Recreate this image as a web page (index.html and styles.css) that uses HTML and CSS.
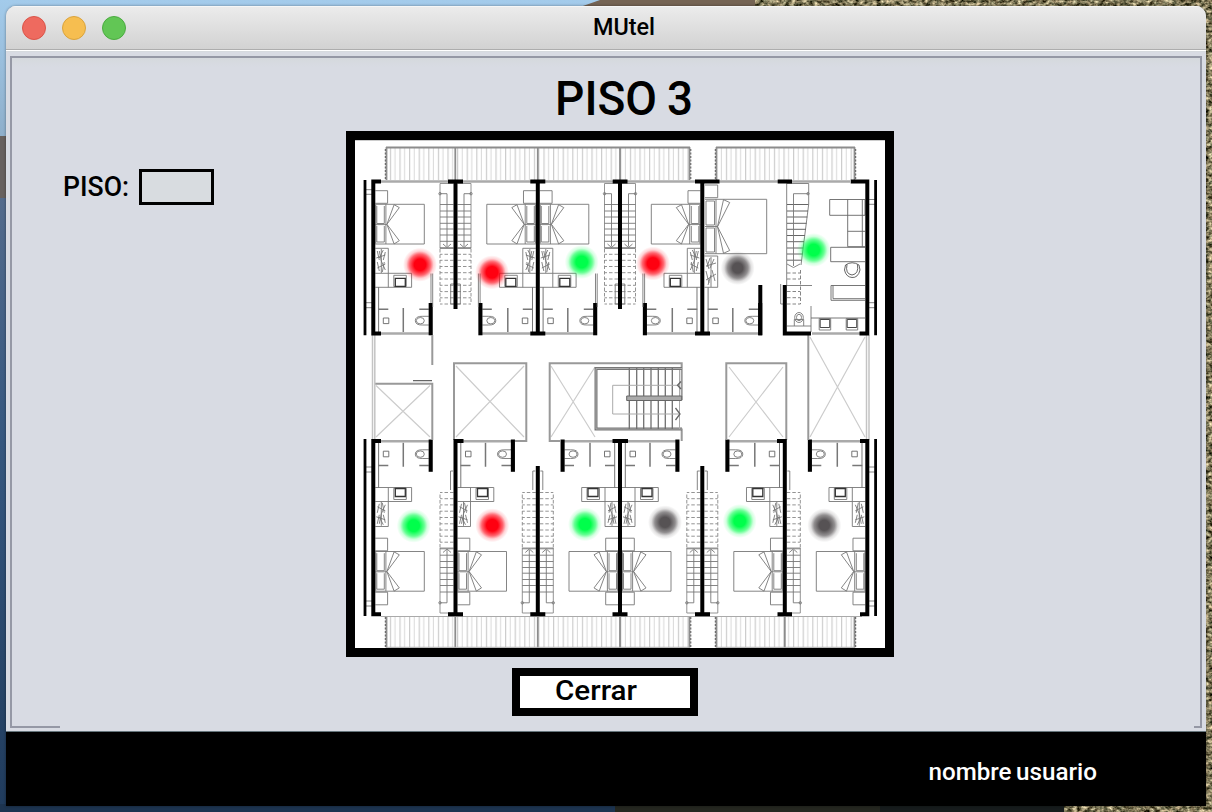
FILE: index.html
```html
<!DOCTYPE html>
<html lang="es">
<head>
<meta charset="utf-8">
<title>MUtel</title>
<link rel="stylesheet" href="styles.css">
</head>
<body>
<div class="desktop">
<svg class="wallpaper" width="1212" height="812" aria-hidden="true">
  <defs>
    <linearGradient id="sky" x2="0" y2="1"><stop offset="0" stop-color="#a3cbeb"/><stop offset="1" stop-color="#8eafcb"/></linearGradient>
    <linearGradient id="sea" x2="0" y2="1"><stop offset="0" stop-color="#536b8c"/><stop offset=".4" stop-color="#35577f"/><stop offset="1" stop-color="#203b5c"/></linearGradient>
    <filter id="rock" x="0" y="0" width="100%" height="100%" color-interpolation-filters="sRGB">
      <feTurbulence type="fractalNoise" baseFrequency=".22 .3" numOctaves="3" seed="8"/>
      <feColorMatrix values="1.4 0 0 0 -.19  1.3 .1 0 0 -.22  1.15 .1 0 0 -.27  0 0 0 0 1"/>
      <feComposite in2="SourceGraphic" operator="in"/>
    </filter>
  </defs>
  <rect width="1212" height="136" fill="url(#sky)"/>
  <rect y="136" width="8" height="64" fill="#67615f"/>
  <rect y="198" width="8" height="614" fill="url(#sea)"/>
  <rect y="804" width="620" height="8" fill="#1d3450"/>
  <path d="M580 7L600 0H780L760 7z" fill="#756454"/>
  <path d="M755 0H1212V812H1064V804H1200V10H755z" filter="url(#rock)"/>
  <path d="M615 804H880V812H615z" fill="#252720"/><path d="M880 804H1064V812H880z" fill="#171c1d"/>
</svg>
<div class="window">
  <header class="titlebar">
    <span class="light red"></span><span class="light amber"></span><span class="light green"></span>
    <svg class="app-name" width="70" height="30"><text x="1" y="24" font-size="24" textLength="62" lengthAdjust="spacingAndGlyphs">MUtel</text></svg>
  </header>
  <main class="pane">
    <svg class="heading" width="150" height="59"><text y="43" font-size="49"><tspan x="5" textLength="102" lengthAdjust="spacingAndGlyphs">PISO</tspan><tspan x="117" textLength="26" lengthAdjust="spacingAndGlyphs">3</tspan></text></svg>
    <div class="row">
      <div class="form">
        <svg width="76" height="36"><text x="0" y="26.500" font-size="27.5" textLength="66" lengthAdjust="spacingAndGlyphs">PISO:</text></svg>
        <span class="field"></span>
      </div>
      <div class="frame">
<svg class="plan" width="530" height="508" viewBox="355 140 530 508">
  <defs>
    <radialGradient id="r"><stop offset=".34" stop-color="#ff0010"/><stop offset=".62" stop-color="#ff0010" stop-opacity=".6"/><stop offset=".8" stop-color="#ff0010" stop-opacity=".18"/><stop offset="1" stop-color="#ff0010" stop-opacity="0"/></radialGradient>
    <radialGradient id="g"><stop offset=".34" stop-color="#00ff4b"/><stop offset=".62" stop-color="#00ff4b" stop-opacity=".6"/><stop offset=".8" stop-color="#00ff4b" stop-opacity=".18"/><stop offset="1" stop-color="#00ff4b" stop-opacity="0"/></radialGradient>
    <radialGradient id="k"><stop offset=".3" stop-color="#565254"/><stop offset=".6" stop-color="#565254" stop-opacity=".65"/><stop offset=".8" stop-color="#565254" stop-opacity=".18"/><stop offset="1" stop-color="#565254" stop-opacity="0"/></radialGradient>
    <pattern id="slats" x="386" width="9.6" height="40" patternUnits="userSpaceOnUse"><path d="M4.500 0V40" stroke="#c2c2c2"/><path d="M9 0V40" stroke="#d8d8d8"/></pattern>
    <g id="bed">
      <path d="M2 204.3H51V244H2M2.5 205V243.500M12.600 204.3V244M11 206V223.500H3.500V206M11 226V242H3.500V226M2 224.6H13.600"/>
      <path d="M13.600 224.3L20.800 204.700L26 207.600zM13.600 224.3L20.800 243.900L26 240.700z"/>
    </g>
    <path id="stand" d="M2 190.7H14.300V203.300H2"/>
    <g id="closet">
      <path d="M2 248.300H15V273.300M8 249V273"/>
      <path d="M4 251L6 260M6 251L8 261M10 250L6 258M12 252L10 260M4 262L6 271M8 261L12 270M11 262L9 272M3 258L12 255M4 268L12 264" stroke-width=".9"/>
    </g>
    <g id="desk"><path d="M2 273.300H38.300V287.300H2M15 273.300V287.300M20.500 286.600V275.300H33V286.600z"/><path d="M22 278.300H32V286.300H22z" stroke="#333" stroke-width="1.300"/></g>
    <g id="bath">
      <path d="M5.300 287.300V332M10 318H15.500V323.600H10z" stroke="#666"/>
      <path d="M5 309.300H15M46 309.300H55.500M30 308V332" stroke="#777" stroke-width="1.500"/>
      <path d="M55.500 316.300H49.500Q42 316 42 320.700Q42 325.300 49.500 325H55.500"/><ellipse cx="47" cy="320.700" rx="4" ry="3.200"/>
      <path d="M7 333.500H56" stroke="#aaa" stroke-width="2.500"/>
      <path d="M57.400 303V335.300" stroke="#000" stroke-width="4.100"/>
    </g>
    <path id="door" d="M57.700 273.500V303M59.400 273.500V307" stroke="#777"/>
    <g id="wet"><use href="#closet"/><use href="#desk"/><use href="#bath"/></g>
    <g id="suite"><use href="#stand"/><use href="#bed"/><use href="#wet"/><use href="#door"/></g>
    <g id="lower"><use href="#wet" transform="matrix(1 0 0 -1 0 774.800)"/><use href="#bed" y="347.200"/><use href="#stand" y="347.500"/><use href="#stand" y="401.500"/></g>
    <g id="steps">
      <path d="M2 183.500H15.500V248.500H2" stroke="#888"/>
      <path d="M2 204.500H15.500M2 211H15.500M2 217H15.500M2 223.300H15.500M2 229H15.500M2 235H15.500M2 241.300H15.500M2 247.700H15.500"/>
      <path d="M15.500 193.700H8.500V246.500M4.500 244L8.500 247.500L12.500 244" stroke="#777"/><circle cx="15.500" cy="193.700" r="1.200"/>
      <path d="M15.500 249V304M2 254.300H15.500M2 260.300H15.500M2 266.500H15.500M2 272.700H15.500M2 279H15.500M2 285.300H15.500M2 291.600H15.500M2 297.800H15.500M2 304H15.500" stroke-dasharray="3.500 2" stroke="#888"/>
    </g>
    <g id="steps2"><use href="#steps"/><use href="#steps" transform="scale(-1 1)"/></g>
    <path id="jamb" d="M2.500 471H5V490" stroke="#777"/>
    <g id="sink"><path d="M0 0H11.500V11.500H0z"/><path d="M1 1H10.500V9H1z" stroke="#333"/></g>
  </defs>
  <rect x="355" y="140" width="530" height="508" fill="#fff"/>
  <path d="M355 140.500H885" stroke="#ccc"/>

  <!-- balconies -->
  <g fill="url(#slats)" stroke="none"><rect x="388" y="148" width="301" height="32"/><rect x="718" y="148" width="136" height="32"/><rect x="388" y="617" width="301" height="30"/><rect x="718" y="617" width="136" height="30"/></g>
  <g fill="none" stroke="#8c8c8c" stroke-width="1.800">
    <path d="M386 147.500H690M716 147.500H855M386.500 147V180M455.300 147V180M537.800 147V180M620 147V180M689.500 147V180M716.500 147V180M854.500 147V180M386.500 616V647.500M455.300 616V647.500M537.800 616V647.500M620 616V647.500M689.500 616V647.500M716.500 616V647.500M784.800 616V647.500M854.500 616V647.500"/>
    <path d="M385.300 149V180M690.800 149V180M715.300 149V180M855.700 149V180M385.300 617V647M690.800 617V647M715.300 617V647M855.700 617V647" stroke="#555" stroke-width="1" stroke-dasharray="2 1.500"/>
    <path d="M381 181.500H850" stroke="#aaa" stroke-width="2.500"/>
    <path d="M381 616.500H862M386 647.300H690M716 647.300H855" stroke="#aaa" stroke-width="1"/>
  </g>

  <g class="thin">
    <!-- upper suites -->
    <use href="#suite" x="373.300"/>
    <use href="#suite" transform="matrix(-1 0 0 1 537.800 0)"/>
    <use href="#suite" x="537.800"/>
    <use href="#suite" transform="matrix(-1 0 0 1 702.300 0)"/>
    <use href="#bath" x="702.800"/>
    <path d="M705 185H717.700V197.700H705M705 199.300H766.700V253.700H705M716 199.300V253.700M706 201H714.500V225H706zM706 228H714.500V252H706zM705 226.500H717.500"/>
    <path d="M717.500 226.700L723.500 199.700L729.700 202.500zM717.500 226.700L723.500 253.300L729.700 250.500z"/>
    <path d="M704.500 256H717.700V287.300H704.500M711 257V287M706 259L709 269M710 258L707 267M714 259L710 268M706 271L709 283M712 270L715 281M711 275L708 285M706 266L716 263M706 280L716 274"/>
    <use href="#steps2" x="455.500"/><use href="#steps2" x="620"/>
    <path d="M450.700 284H460.300V304H450.700zM615.200 284H624.800V304H615.200z"/>

    <!-- lounge -->
    <path d="M786.700 183.300V285M786.700 183.500H808.700V204.300L801 265"/>
    <path d="M787 204.500H808.500M787 211H808M787 217H807.300M787 223.300H806.500M787 229.300H805.700M787 235.500H804.800M787 241.700H804M787 248H803.200M787 254H802.500M787 260.200H801.500" stroke="#555"/>
    <path d="M808 193.700H793.500V266M787 264L793.500 267.500L800 264"/><circle cx="808" cy="193.700" r="1.200"/>
    <path d="M787 273H800.500M787 279H800.500M787 291.500H800.500M787 297.700H800.500M787 304H800.500V268" stroke-dasharray="3.500 2"/>
    <path d="M787 285.500H812M811 306V332M787 326H811M780.700 284V304H783M794.300 326V319.500H803.700V326"/><ellipse cx="799" cy="317.500" rx="4.300" ry="5"/><ellipse cx="799" cy="317.500" rx="2.500" ry="3.200"/>
    <path d="M811 318H865M829.700 199.500H865V215.300H829.700zM847.700 199.500V246.700H865M862.300 199.500V246.700M847.700 231.300H865M865 247.300H830.700V261.700H865M865 285.500H831V300.300H865M833 285.500V298.700H865" stroke="#666"/>
    <path d="M812 333.500H860" stroke="#aaa" stroke-width="2.500"/>
    <use href="#sink" x="819.200" y="318.500"/><use href="#sink" x="846.200" y="318.500"/>
    <path d="M845.500 265Q852 260.500 859 265L860 270Q858 278 852 277.500Q846 277 844.500 270zM847 264.500Q845 274 852 275Q859 274 857.500 264.500" stroke="#555"/>

    <!-- lower suites -->
    <use href="#lower" x="373.300"/><use href="#lower" x="455.500"/>
    <use href="#lower" transform="matrix(-1 0 0 1 620 0)"/>
    <use href="#lower" x="620"/>
    <use href="#lower" transform="matrix(-1 0 0 1 784.800 0)"/><use href="#lower" transform="matrix(-1 0 0 1 867.300 0)"/>
    <use href="#steps" transform="matrix(-1 0 0 -1 455.500 796.500)"/>
    <use href="#steps2" transform="matrix(1 0 0 -1 537.800 796.500)"/>
    <use href="#steps2" transform="matrix(1 0 0 -1 702.300 796.500)"/>
    <use href="#steps" transform="matrix(1 0 0 -1 784.800 796.500)"/>
    <use href="#jamb" transform="matrix(-1 0 0 1 455.500 0)"/><use href="#jamb" transform="matrix(-1 0 0 1 537.800 0)"/><use href="#jamb" x="537.800"/><use href="#jamb" transform="matrix(-1 0 0 1 702.300 0)"/><use href="#jamb" x="702.300"/><use href="#jamb" x="784.800"/>

    <!-- facade ties -->
    <path d="M366 189.700H372M366 194.300H372M366 302.700H372M366 307.700H372M869 199.500H875M869 204.300H875M869 302.700H875M869 307.700H875M366 467H372M366 472H372M366 601H372M366 606H372M869 467H875M869 472H875M869 601H875M869 606H875"/>
  </g>

  <!-- courtyards and stair core -->
  <g fill="none" stroke="#ccc" stroke-width="1.200">
    <path d="M376 385.500L430 437M430 385.500L376 437M456 366L524 437M524 366L456 437M551 366L595 437M595 367L551 437M729 367L783 437M783 367L729 437M810 337L865 437M865 337L810 437"/>
  </g>
  <g fill="none" stroke="#999" stroke-width="2">
    <path d="M432.300 335V365M375 383.700H432.300V440M454 440V363.300H526.300V441H515M560 441H549.700V363.300H681.700V400M681.700 441V428.500M726.300 440V363.300H786.300V440M808.300 335V440"/>
    <path d="M372.500 335V440M374.800 335V440M866.500 335V440M869 335V440" stroke="#c4c4c4" stroke-width="1.500"/>
    <path d="M682 368.500H596V429H682" stroke="#777" stroke-width="3"/>
    <path d="M682 368.500H596V429H682" stroke="#aaa" stroke-width="1"/>
    <path d="M629.300 368V429M636.700 368V429M643.700 368V429M651 368V429M658.300 368V429M665.300 368V429M672.300 368V429" stroke="#707070" stroke-width="1.300"/>
    <path d="M679.500 370V429M680 385.300H612.700V414H679" stroke="#aaa" stroke-width="1"/>
    <path d="M626.700 396H681.700V400.500H626.700z" fill="#aaa" stroke="#666" stroke-width="1"/>
    <path d="M681 381.500L677.500 385.300L681 389M675.500 408L680 414L675.500 420M413 380.700H432" stroke="#666" stroke-width="1.300"/>
  </g>

  <!-- structural walls -->
  <g fill="none" stroke="#000" stroke-width="4">
    <path d="M381 181.600H373.300V333.500H381M448 181.600H463M455.500 181V309M530.300 181.600H545.300M537.800 181V334M530.300 333.500H545.300M612.700 181.600H627.500M620 181V309M695 181.600H719.500M702.300 181V334M695 333.500H710M777.700 181.600H792M760.300 285V335.300M811 333.500H784.800V285M850.700 181.600H867.300V333.500H859.500"/>
    <path d="M381 441H373.300V614.200H381M463.500 441H455.500V614.200M448 614.200H463M537.800 466V614.200M530.300 614.200H545.300M612.500 441H628M620 441V614.200M612.500 614.200H627.500M702.300 466V614.200M695 614.200H710M777 441H784.800V614.200M777.500 614.200H792M860 441H867.300V614.200H860"/>
    <path d="M365 180V335.300M875.600 180V335.300M365 439V616M875.600 439V616" stroke-width="2.800"/>
  </g>

  <!-- room status -->
  <g fill="url(#r)"><circle cx="420" cy="264.700" r="17"/><circle cx="492" cy="272.300" r="17"/><circle cx="653" cy="263.500" r="17"/><circle cx="492.300" cy="525.300" r="17"/></g>
  <g fill="url(#g)"><circle cx="581.700" cy="262" r="17"/><circle cx="813.700" cy="250" r="17"/><circle cx="413.700" cy="525.700" r="17"/><circle cx="585" cy="524.300" r="17"/><circle cx="739.700" cy="521" r="17"/></g>
  <g fill="url(#k)"><circle cx="737.700" cy="268" r="17"/><circle cx="665" cy="522.300" r="17"/><circle cx="824.300" cy="525.300" r="17"/></g>
</svg>
      </div>
    </div>
    <button class="close" type="button"><svg width="90" height="32"><text x="1" y="24" font-size="28" textLength="82" lengthAdjust="spacingAndGlyphs">Cerrar</text></svg></button>
  </main>
  <footer class="status"><svg width="172" height="34"><text y="24" font-size="23.500"><tspan x="1.500" textLength="83" lengthAdjust="spacingAndGlyphs">nombre</tspan><tspan x="89" textLength="81" lengthAdjust="spacingAndGlyphs">usuario</tspan></text></svg></footer>
</div>
</div>
</body>
</html>
```
FILE: styles.css
```css
* { box-sizing: border-box; }
body { margin: 0; overflow: hidden; font-family: Roboto, "Liberation Sans", sans-serif; font-weight: 500; }
svg { display: block; flex: none; }
.desktop { width: 1212px; height: 812px; padding: 6px; display: grid; overflow: hidden; }
.wallpaper { grid-area: 1 / 1; margin: -6px; }
.window {
  grid-area: 1 / 1; z-index: 1; width: 1200px; height: 800px;
  display: flex; flex-direction: column; overflow: hidden;
  border-radius: 10px 10px 0 0; background: #d8dbe3;
  box-shadow: 0 0 3px rgba(0, 0, 0, .4);
}
.titlebar {
  height: 46px; flex: none; display: flex; align-items: flex-start; gap: 16px; padding: 10px 16px 0;
  background: linear-gradient(#ececec, #d2d2d2 43px, #adadad 43px, #adadad 44px, #fff 44px, #fff 45px, #d6dade 45px);
  box-shadow: inset 0 1px #f6f6f6;
}
.light { width: 24px; height: 24px; border-radius: 50%; border: 1px solid; }
.red { background: #ee6a5f; border-color: #d95549; }
.amber { background: #f6be50; border-color: #d9a33d; }
.green { background: #62c655; border-color: #4bab40; }
.app-name { margin: -5px 0 0 450px; }
.pane {
  margin: 4px 4px 3px; height: 672px; flex: none;
  display: flex; flex-direction: column; align-items: flex-start;
  border: 2px solid #9598a5; border-bottom: 0;
  background:
    linear-gradient(#9598a5, #9598a5) left bottom / 48px 2px no-repeat,
    linear-gradient(#9598a5, #9598a5) right bottom / 6px 2px no-repeat,
    linear-gradient(#d5d9dd, #d8dbe3) 0 0 / 100% 9px no-repeat,
    #d8dbe3;
}
.heading { margin: 14px 0 0 538px; }
.row { display: flex; }
.form { width: 334px; padding: 38px 0 0 51px; display: flex; }
.field { width: 75px; height: 36px; border: 3px solid #000; background: #d8dce0; }
.frame { border: 9px solid #000; }
.thin { fill: none; stroke: #777; stroke-width: .9; }
.close {
  width: 186px; height: 48px; margin: 11px 0 0 500px; padding: 0 0 0 34px;
  border: 8px solid #000; background: #fff; font: inherit; color: #000; display: flex;
}
.status {
  flex: 1; background: #000; border-top: 1px solid #66757c;
  display: flex; justify-content: flex-end; padding: 24px 107px 0 0;
}
.status text { fill: #fff; }
```
